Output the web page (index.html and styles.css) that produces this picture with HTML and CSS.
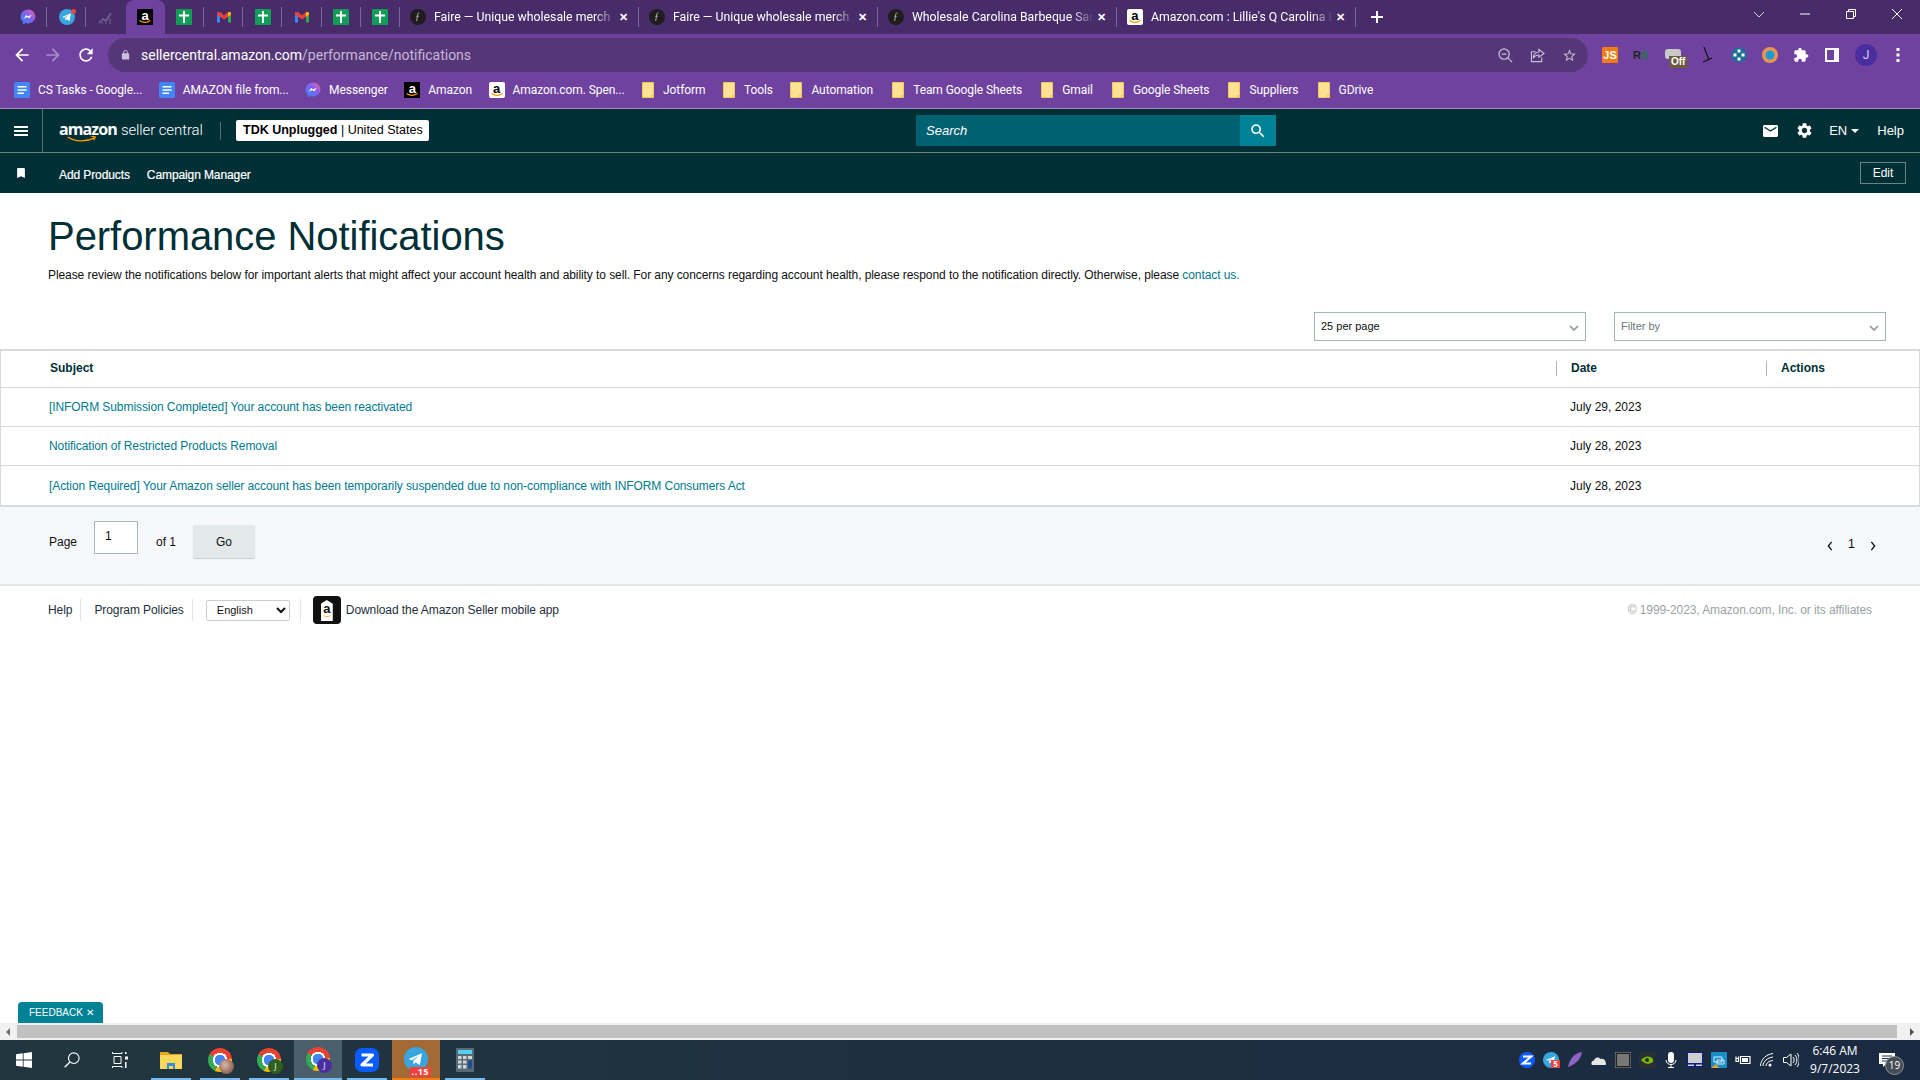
FILE: index.html
```html
<!DOCTYPE html>
<html lang="en">
<head>
    <meta charset="UTF-8">
    <title>Performance Notifications</title>
    <link rel="stylesheet" href="styles.css">
</head>
<body>
    <!-- shared icons -->
    <svg class="icon-defs" aria-hidden="true">
        <defs>
            <linearGradient id="msgGrad" x1="0" y1="1" x2="1" y2="0">
                <stop offset="0" stop-color="#2b8cf5"/>
                <stop offset="0.6" stop-color="#8a5cf0"/>
                <stop offset="1" stop-color="#f26a8e"/>
            </linearGradient>
        </defs>
        <symbol id="i-messenger" viewBox="0 0 16 16">
            <path fill="url(#msgGrad)" d="M8 .5C3.8.5.6 3.5.6 7.6c0 2.1.9 4 2.3 5.2v2.7l2.5-1.4c.8.2 1.7.3 2.6.3 4.2 0 7.4-3 7.4-6.8S12.2.5 8 .5z"/>
            <path fill="#fff" d="M3.6 9.8 6.2 6l2 1.5 3.6-1.9-2.6 3.9-2-1.5z"/>
        </symbol>
        <symbol id="i-telegram" viewBox="0 0 16 16">
            <circle cx="8" cy="8" r="8" fill="#37a6de"/>
            <path fill="#fff" d="M3 8l9-3.8-1.5 8-2.7-2-1.4 1.4-.3-2.4 4-3.5-5 3.1z"/>
        </symbol>
        <symbol id="i-chart" viewBox="0 0 16 16">
            <path fill="none" stroke="#7a6590" stroke-width="1.5" d="M1 14l4-4 3 2 5-8"/>
            <path fill="#5b4678" d="M3 11h2v4H3zm4 1h2v3H7zm4-3h2v6h-2z"/>
        </symbol>
        <symbol id="i-smile" viewBox="0 0 16 4">
            <path fill="none" stroke="#f90" stroke-width="1.1" d="M2.5.5c3.5 2.4 7.5 2.4 11 0"/>
        </symbol>
        <symbol id="i-sheet" viewBox="0 0 16 16">
            <rect width="16" height="16" rx="1" fill="#0f9d58"/>
            <path fill="#fff" d="M7 2h2v3.500h4v2H9V14H7V7.500H3v-2h4z"/>
        </symbol>
        <symbol id="i-gmail" viewBox="0 0 16 16">
            <path fill="#4285f4" d="M1 3.500h3v10H1z"/>
            <path fill="#34a853" d="M12 3.500h3v10h-3z"/>
            <path fill="#ea4335" d="M1 3.500 4 3l4 3.500L12 3l3 .5v2l-7 5-7-5z"/>
            <path fill="#fbbc04" d="M12 3l3 .5v2l-3 2.200z"/>
        </symbol>
        <symbol id="i-faire" viewBox="0 0 16 16">
            <circle cx="8" cy="8" r="8" fill="#1f1d1e"/>
            <path fill="none" stroke="#b0acaa" d="M9.400 4c-1.200-.2-1.500.4-1.700 1.500L6.700 12M6.400 7.300h2.400"/>
        </symbol>
        <symbol id="i-doc" viewBox="0 0 16 16">
            <rect width="16" height="16" rx="1.500" fill="#4285f4"/>
            <path fill="#fff" d="M3.500 4h9v1.600h-9zm0 3.200h9v1.600h-9zm0 3.200H10V12H3.500z"/>
        </symbol>
        <symbol id="i-folder" viewBox="0 0 14 16">
            <path fill="#fde293" stroke="#f0c75e" d="M1.500.5h11v15h-11z"/>
            <path fill="#f0c75e" d="M10 16v-3h3z"/>
        </symbol>
        <symbol id="i-chevron" viewBox="0 0 10 6">
            <path fill="none" stroke="#879596" stroke-width="1.600" d="M1 1l4 4 4-4"/>
        </symbol>
    </svg>

    <!-- browser chrome -->
    <div class="tab-strip">
        <div class="tab-pin sep"><svg class="fav"><use href="#i-messenger"/></svg></div>
        <div class="tab-pin sep"><svg class="fav"><use href="#i-telegram"/></svg><span class="dot"></span></div>
        <div class="tab-pin"><svg class="fav"><use href="#i-chart"/></svg></div>
        <div class="tab-pin active"><span class="fav amz black">a<svg><use href="#i-smile"/></svg></span></div>
        <div class="tab-pin sep"><svg class="fav"><use href="#i-sheet"/></svg></div>
        <div class="tab-pin sep"><svg class="fav"><use href="#i-gmail"/></svg></div>
        <div class="tab-pin sep"><svg class="fav"><use href="#i-sheet"/></svg></div>
        <div class="tab-pin sep"><svg class="fav"><use href="#i-gmail"/></svg></div>
        <div class="tab-pin sep"><svg class="fav"><use href="#i-sheet"/></svg></div>
        <div class="tab-pin sep"><svg class="fav"><use href="#i-sheet"/></svg></div>
        <div class="tab sep"><svg class="fav"><use href="#i-faire"/></svg><span class="tab-title">Faire — Unique wholesale merch</span><span class="tab-close">✕</span></div>
        <div class="tab sep"><svg class="fav"><use href="#i-faire"/></svg><span class="tab-title">Faire — Unique wholesale merch</span><span class="tab-close">✕</span></div>
        <div class="tab sep"><svg class="fav"><use href="#i-faire"/></svg><span class="tab-title">Wholesale Carolina Barbeque Sau</span><span class="tab-close">✕</span></div>
        <div class="tab sep"><span class="fav amz white">a<svg><use href="#i-smile"/></svg></span><span class="tab-title">Amazon.com : Lillie's Q Carolina B</span><span class="tab-close">✕</span></div>
        <svg class="new-tab" viewBox="0 0 12 12"><path fill="#fff" d="M5 0h2v5h5v2H7v5H5V7H0V5h5z"/></svg>
        <div class="win-controls">
            <svg viewBox="0 0 10 10"><path fill="none" stroke="#d8cfe4" d="M0 3l5 5 5-5"/></svg>
            <svg viewBox="0 0 10 10"><path fill="none" stroke="#fff" d="M0 5h10"/></svg>
            <svg viewBox="0 0 10 10"><path fill="none" stroke="#fff" d="M.5 2.500h7v7h-7zM2.500 2.500v-2h7v7h-2"/></svg>
            <svg viewBox="0 0 10 10"><path fill="none" stroke="#fff" d="M0 0l10 10M10 0 0 10"/></svg>
        </div>
    </div>

    <div class="toolbar">
        <svg class="nav-btn" viewBox="0 0 24 24"><path fill="#fff" d="M20 11H7.830l5.590-5.590L12 4l-8 8 8 8 1.410-1.410L7.830 13H20v-2z"/></svg>
        <svg class="nav-btn" viewBox="0 0 24 24"><path fill="#a88fc6" d="M12 4l-1.410 1.410L16.170 11H4v2h12.170l-5.580 5.590L12 20l8-8z"/></svg>
        <svg class="nav-btn" viewBox="0 0 24 24"><path fill="#fff" d="M17.650 6.350C16.200 4.900 14.210 4 12 4c-4.420 0-7.990 3.580-7.990 8s3.570 8 7.990 8c3.730 0 6.840-2.550 7.730-6h-2.080c-.82 2.330-3.040 4-5.650 4-3.310 0-6-2.690-6-6s2.690-6 6-6c1.660 0 3.140.69 4.220 1.780L13 11h7V4l-2.350 2.350z"/></svg>
        <div class="omnibox">
            <svg class="lock" viewBox="0 0 24 24"><path fill="#cbbdde" d="M18 8h-1V6c0-2.760-2.240-5-5-5S7 3.240 7 6v2H6c-1.100 0-2 .9-2 2v10c0 1.100.9 2 2 2h12c1.100 0 2-.9 2-2V10c0-1.100-.9-2-2-2zM9 6c0-1.660 1.340-3 3-3s3 1.340 3 3v2H9V6z"/></svg>
            <span class="url"><span class="url-host">sellercentral.amazon.com</span>/performance/notifications</span>
            <div class="omni-actions">
                <svg viewBox="0 0 16 16"><circle cx="6.500" cy="6.500" r="5.500" fill="none" stroke="#cbbdde" stroke-width="1.300"/><path stroke="#cbbdde" stroke-width="1.300" d="M4 6.500h5M10.500 10.500 15 15"/></svg>
                <svg viewBox="0 0 16 16"><path fill="none" stroke="#cbbdde" stroke-width="1.200" d="M6 4H1.500v10.500h11V10M9.500 1.500 15 5.800l-5.500 4V7.500C6.500 7.500 4.500 9 3.500 11c0-4 2.500-6.500 6-6.800z"/></svg>
                <svg viewBox="0 0 24 24"><path fill="#cbbdde" d="M22 9.240l-7.190-.62L12 2 9.190 8.630 2 9.240l5.460 4.730L5.820 21 12 17.270 18.180 21l-1.630-7.030L22 9.240zM12 15.400l-3.760 2.270 1-4.280-3.320-2.880 4.380-.38L12 6.100l1.710 4.040 4.380.38-3.320 2.880 1 4.280L12 15.400z"/></svg>
            </div>
        </div>
        <div class="extensions">
            <span class="ext ext-js">JS</span>
            <span class="ext ext-rs">R<b>S</b></span>
            <span class="ext ext-off"><i></i><b>Off</b></span>
            <svg class="ext" viewBox="0 0 16 16"><path fill="none" stroke="#111" stroke-width="1.200" d="M4 0l5 13M3 15l9-4"/></svg>
            <svg class="ext" viewBox="0 0 16 16"><circle cx="8" cy="8" r="7.500" fill="#1c6f96"/><path fill="#fff" d="M6.500 2.500h3v3h-3zm0 8h3v3h-3zm-4-4h3v3h-3zm8 0h3v3h-3z"/></svg>
            <svg class="ext" viewBox="0 0 16 16"><circle cx="8" cy="8" r="8" fill="#e89550"/><circle cx="8" cy="8" r="4.500" fill="#1b9ad6"/></svg>
            <svg class="ext" viewBox="0 0 24 24"><path fill="#fff" d="M20.500 11H19V7c0-1.100-.9-2-2-2h-4V3.500C13 2.120 11.880 1 10.500 1S8 2.120 8 3.500V5H4c-1.100 0-1.990.9-1.990 2v3.800H3.500c1.490 0 2.700 1.210 2.700 2.700s-1.210 2.700-2.700 2.700H2V20c0 1.100.9 2 2 2h3.800v-1.500c0-1.490 1.210-2.700 2.700-2.700 1.490 0 2.700 1.210 2.700 2.700V22H17c1.100 0 2-.9 2-2v-4h1.500c1.380 0 2.500-1.120 2.500-2.500S21.880 11 20.500 11z"/></svg>
            <svg class="ext" viewBox="0 0 16 16"><path fill="#fff" d="M1 1h14v14H1z"/><path fill="#6f42a0" d="M3 3h7v10H3z"/></svg>
            <span class="avatar">J</span>
            <svg class="ext dots" viewBox="0 0 4 16"><path fill="#fff" d="M.5 1h3v3h-3zm0 5.500h3v3h-3zm0 5.500h3v3h-3z"/></svg>
        </div>
    </div>

    <div class="bookmarks">
        <span class="bm"><svg class="fav"><use href="#i-doc"/></svg>CS Tasks - Google...</span>
        <span class="bm"><svg class="fav"><use href="#i-doc"/></svg>AMAZON file from...</span>
        <span class="bm"><svg class="fav"><use href="#i-messenger"/></svg>Messenger</span>
        <span class="bm"><span class="fav amz black">a<svg><use href="#i-smile"/></svg></span>Amazon</span>
        <span class="bm"><span class="fav amz white">a<svg><use href="#i-smile"/></svg></span>Amazon.com. Spen...</span>
        <span class="bm"><svg class="fav fold"><use href="#i-folder"/></svg>Jotform</span>
        <span class="bm"><svg class="fav fold"><use href="#i-folder"/></svg>Tools</span>
        <span class="bm"><svg class="fav fold"><use href="#i-folder"/></svg>Automation</span>
        <span class="bm"><svg class="fav fold"><use href="#i-folder"/></svg>Team Google Sheets</span>
        <span class="bm"><svg class="fav fold"><use href="#i-folder"/></svg>Gmail</span>
        <span class="bm"><svg class="fav fold"><use href="#i-folder"/></svg>Google Sheets</span>
        <span class="bm"><svg class="fav fold"><use href="#i-folder"/></svg>Suppliers</span>
        <span class="bm"><svg class="fav fold"><use href="#i-folder"/></svg>GDrive</span>
    </div>

    <!-- seller central page -->
    <div class="page">
        <div class="sc-header">
            <div class="hamburger"><span></span><span></span><span></span></div>
            <div class="logo">
                <span class="logo-amazon">amazon</span><span class="logo-seller">seller central</span>
                <svg class="logo-smile" viewBox="0 0 36 8"><path fill="none" stroke="#f90" stroke-width="1.500" d="M1 1c9 6 22 6 32 1M29 0l5 1-2 4"/></svg>
            </div>
            <div class="account"><b>TDK Unplugged</b> | United States</div>
            <div class="search">
                <span class="search-input">Search</span>
                <span class="search-btn"><svg viewBox="0 0 24 24"><path fill="#fff" d="M15.500 14h-.79l-.28-.27C15.410 12.590 16 11.110 16 9.500 16 5.910 13.090 3 9.500 3S3 5.910 3 9.500 5.910 16 9.500 16c1.610 0 3.090-.59 4.230-1.570l.27.28v.79l5 4.990L20.490 19l-4.990-5zm-6 0C7.010 14 5 11.990 5 9.500S7.010 5 9.500 5 14 7.010 14 9.500 11.990 14 9.500 14z"/></svg></span>
            </div>
            <div class="header-right">
                <svg class="hd-mail" viewBox="2 4 20 16"><path fill="#fff" d="M20 4H4c-1.100 0-1.990.9-1.990 2L2 18c0 1.100.9 2 2 2h16c1.100 0 2-.9 2-2V6c0-1.100-.9-2-2-2zm0 4l-8 5-8-5V6l8 5 8-5v2z"/></svg>
                <svg class="hd-gear" viewBox="2 2 20 20"><path fill="#fff" d="M19.140 12.940c.04-.3.06-.61.06-.94 0-.32-.02-.64-.07-.94l2.030-1.580c.18-.14.23-.41.12-.61l-1.920-3.320c-.12-.22-.37-.29-.59-.22l-2.390.96c-.5-.38-1.030-.7-1.620-.94l-.36-2.540c-.04-.24-.24-.41-.48-.41h-3.840c-.24 0-.43.17-.47.41l-.36 2.540c-.59.24-1.130.57-1.620.94l-2.390-.96c-.22-.08-.47 0-.59.22L2.740 8.870c-.12.21-.08.47.12.61l2.030 1.580c-.05.3-.09.63-.09.94s.02.64.07.94l-2.030 1.580c-.18.14-.23.41-.12.61l1.920 3.320c.12.22.37.29.59.22l2.390-.96c.5.38 1.030.7 1.620.94l.36 2.540c.05.24.24.41.48.41h3.840c.24 0 .44-.17.47-.41l.36-2.540c.59-.24 1.130-.56 1.620-.94l2.390.96c.22.08.47 0 .59-.22l1.920-3.320c.12-.22.07-.47-.12-.61l-2.010-1.580zM12 15.600c-1.980 0-3.600-1.620-3.600-3.600s1.620-3.600 3.600-3.600 3.600 1.620 3.600 3.600-1.620 3.600-3.600 3.600z"/></svg>
                <span class="hd-lang">EN<i class="caret"></i></span>
                <span class="hd-help">Help</span>
            </div>
        </div>

        <div class="sc-subnav">
            <svg class="sub-mark" viewBox="5 3 14 18"><path fill="#fff" d="M17 3H7c-1.100 0-2 .9-2 2v16l7-3 7 3V5c0-1.100-.9-2-2-2z"/></svg>
            <span class="sub-link first">Add Products</span>
            <span class="sub-link">Campaign Manager</span>
            <span class="edit-btn">Edit</span>
        </div>

        <div class="intro">
            <h1>Performance Notifications</h1>
            <p>Please review the notifications below for important alerts that might affect your account health and ability to sell. For any concerns regarding account health, please respond to the notification directly. Otherwise, please <a href="#">contact us.</a></p>
        </div>

        <div class="filters">
            <div class="dropdown">25 per page<svg><use href="#i-chevron"/></svg></div>
            <div class="dropdown muted">Filter by<svg><use href="#i-chevron"/></svg></div>
        </div>

        <table class="notif-table">
            <thead>
                <tr>
                    <th class="col-subject"><span>Subject</span></th>
                    <th class="col-date"><span>Date</span></th>
                    <th class="col-actions"><span>Actions</span></th>
                </tr>
            </thead>
            <tbody>
                <tr>
                    <td><a href="#">[INFORM Submission Completed] Your account has been reactivated</a></td>
                    <td class="date">July 29, 2023</td>
                    <td></td>
                </tr>
                <tr>
                    <td><a href="#">Notification of Restricted Products Removal</a></td>
                    <td class="date">July 28, 2023</td>
                    <td></td>
                </tr>
                <tr>
                    <td><a href="#">[Action Required] Your Amazon seller account has been temporarily suspended due to non-compliance with INFORM Consumers Act</a></td>
                    <td class="date">July 28, 2023</td>
                    <td></td>
                </tr>
            </tbody>
        </table>

        <div class="pagination">
            <span>Page</span>
            <input class="page-input" type="text" value="1">
            <span class="of">of 1</span>
            <button class="go-btn">Go</button>
            <div class="pager">
                <svg viewBox="0 0 8 12"><path fill="none" stroke="#111" stroke-width="1.600" d="M6 1 2 6l4 5"/></svg>
                <span>1</span>
                <svg viewBox="0 0 8 12"><path fill="none" stroke="#111" stroke-width="1.600" d="M2 1l4 5-4 5"/></svg>
            </div>
        </div>

        <div class="sc-footer">
            <span class="foot-link">Help</span>
            <span class="foot-link">Program Policies</span>
            <select class="lang-select"><option>English</option></select>
            <div class="app-promo">
                <span class="app-icon">a<svg><use href="#i-smile"/></svg></span>
                Download the Amazon Seller mobile app
            </div>
            <span class="copyright">© 1999-2023, Amazon.com, Inc. or its affiliates</span>
        </div>

        <div class="feedback">FEEDBACK <span>✕</span></div>
    </div>

    <div class="h-scroll">
        <span class="arrow-left"></span>
        <div class="h-thumb"></div>
        <span class="arrow-right"></span>
    </div>

    <!-- windows taskbar -->
    <div class="taskbar">
        <div class="tb-btn">
            <svg class="tb-win" viewBox="0 0 16 16"><path fill="#fff" d="M0 2.300l6.800-1v6.300H0zm7.600-1.100L16 0v7.600H7.600zM0 8.400h6.800v6.300L0 13.700zm7.600 0H16V16l-8.400-1.200z"/></svg>
        </div>
        <div class="tb-btn">
            <svg class="tb-ico" viewBox="0 0 16 16"><circle cx="9.800" cy="6.200" r="5.300" fill="none" stroke="#fff" stroke-width="1.100"/><path stroke="#fff" stroke-width="1.300" d="M6 10 .7 15.300"/></svg>
        </div>
        <div class="tb-btn">
            <svg class="tb-ico" viewBox="0 0 16 16"><path fill="none" stroke="#fff" d="M.5 0v1.500H10V0M2 4.500h7v7H2zM.5 16v-1.500H10V16"/><path fill="#fff" d="M13 0h1.500v2H13zm0 4.500h3v3h-3zm0 5.500h1.500v6H13z"/></svg>
        </div>
        <div class="task-items">
            <div class="task open">
                <svg class="tb-app" viewBox="0 0 22 18"><path fill="#e8a81e" d="M0 1h8l2 2h12v4H0z"/><path fill="#fbd75b" d="M0 4h22v14H0z"/><path fill="#2f8fd8" d="M7 12h8v6h-2v-3H9v3H7z"/></svg>
            </div>
            <div class="task open"><span class="chrome"><span class="chrome-badge photo"></span></span></div>
            <div class="task open"><span class="chrome"><span class="chrome-badge green">J</span></span></div>
            <div class="task active"><span class="chrome"><span class="chrome-badge purple">J</span></span></div>
            <div class="task open">
                <svg class="tb-app zoomapp" viewBox="0 0 24 24"><rect width="24" height="24" rx="7" fill="#0b5cff"/><path fill="none" stroke="#fff" stroke-width="3.200" stroke-linejoin="round" d="M6.500 7h11L7 17h11"/></svg>
            </div>
            <div class="task tele">
                <svg class="tb-app zoomapp" viewBox="0 0 16 16"><use href="#i-telegram"/></svg>
                <span class="tele-badge">..15</span>
            </div>
            <div class="task open">
                <svg class="tb-app calc" viewBox="0 0 18 24"><rect width="18" height="24" rx="1" fill="#5a6b78"/><path fill="#54d0f0" d="M2 2h14v4H2z"/><path fill="#cfd6da" d="M2 8h3.500v3H2zm5 0h3.500v3H7zm5 0h4v3h-4zM2 12.500h3.500v3H2zm5 0h3.500v3H7zM2 17h3.500v3.500H2zm5 0h3.500v3.500H7z"/><path fill="#1d4e8f" d="M12 12.500h4v8h-4z"/></svg>
            </div>
        </div>
        <div class="tray">
            <svg class="tray-ico" viewBox="0 0 16 16"><circle cx="8" cy="8" r="8" fill="#0b5cff"/><path fill="none" stroke="#fff" stroke-width="2.200" d="M4 4.500h8l-8 7h8"/></svg>
            <span class="tray-tele"><svg class="tray-ico" viewBox="0 0 16 16"><use href="#i-telegram"/></svg><b>5</b></span>
            <svg class="tray-ico" viewBox="0 0 16 16"><path fill="#8f63c4" d="M15 0C8 1 3 6 1 15c1 0 4-2 6-3 5-3 7-7 8-12z"/></svg>
            <svg class="tray-ico" viewBox="0 0 16 16"><path fill="#e6e6e6" d="M1 13c-1.500-2 0-4.500 2-4.500C4 5 8 4.500 9.500 7c2.500-1 5 1 5 3 1 1.500.5 3-.5 3z"/></svg>
            <svg class="tray-ico" viewBox="0 0 16 16"><rect width="16" height="16" fill="#222" stroke="#999"/><path stroke="#ccc" d="M2 3h12M2 5h12M2 7h12M2 9h12M2 11h12M2 13h12"/></svg>
            <svg class="tray-ico" viewBox="0 0 16 16"><rect width="16" height="16" rx="1" fill="#2a2f33"/><path fill="#76b900" d="M2 8c3-4 9-5 12-1v3C10 13 5 12 2 8z"/><circle cx="8" cy="8" r="2" fill="#2a2f33"/></svg>
            <svg class="tray-ico" viewBox="0 0 16 16"><rect x="5" width="6" height="11" rx="3" fill="#fff"/><path fill="none" stroke="#fff" d="M3 8c0 6 10 6 10 0M8 13v3M5 15.500h6"/></svg>
            <svg class="tray-ico" viewBox="0 0 16 16"><rect x=".5" y=".5" width="15" height="14" fill="#cfcfcf" stroke="#0f1f8a"/><path fill="#0f1f8a" d="M0 11h16v1.500H0zM7 11h2v4H7z"/></svg>
            <svg class="tray-ico" viewBox="0 0 16 16"><rect width="16" height="16" rx="1" fill="#1a8ec7"/><path fill="none" stroke="#d8f0fb" d="M3 5h8v5H3zM6 8h7v4H6z"/><path fill="#e3a53b" d="M0 16l5-4 3 4z"/></svg>
            <svg class="tray-ico" viewBox="0 0 16 16"><path fill="none" stroke="#fff" stroke-width="1.200" d="M5.500 4.500H15v7H5.500zM1 6.500h2.500v3H1zM1 6.500v-2M3.500 6.500v-2"/><path fill="#fff" d="M7 6h6v4H7z"/></svg>
            <svg class="tray-ico" viewBox="0 0 16 16"><path fill="none" stroke="#fff" d="M1.500 14C2 7 7 2.500 14 1.500M4 14c.5-5 4-8 10-9M7 14c.3-3 2.500-5 7-5.500"/><circle cx="11" cy="13" r="1.500" fill="#fff"/></svg>
            <svg class="tray-ico" viewBox="0 0 16 16"><path fill="none" stroke="#fff" d="M.5 5.500h3L8 2v12l-4.500-3.500h-3zM10 5c1.500 1.500 1.500 4.500 0 6M12 3c2.500 2.500 2.500 7.500 0 10M14 1c3 3.500 3 10.500 0 14"/></svg>
            <div class="clock"><span>6:46 AM</span><span>9/7/2023</span></div>
            <div class="notify">
                <svg viewBox="0 0 16 14"><path fill="#fff" d="M0 0h16v11H7l-3 3v-3H0z"/><path stroke="#1b2a40" d="M3 3h10M3 5.500h10M3 8h7"/></svg>
                <span class="notify-count">19</span>
            </div>
        </div>
    </div>
</body>
</html>
```

FILE: styles.css
```css
* {
    margin: 0;
    padding: 0;
    box-sizing: border-box;
}

body {
    font-family: "Liberation Sans", Arial, sans-serif;
    font-size: 12px;
    color: #0f1111;
    background: #fff;
    display: flex;
    flex-direction: column;
    height: 100vh;
    overflow: hidden;
}

.icon-defs {
    position: absolute;
    width: 0;
    height: 0;
}

.fav {
    width: 16px;
    height: 16px;
    flex: none;
}

/* amazon favicon, black or white tile */
.amz {
    position: relative;
    display: block;
    font: bold 13px/13px "Liberation Sans", sans-serif;
    text-align: center;
    letter-spacing: 0;
}

.amz svg {
    position: absolute;
    left: 0;
    bottom: 1px;
    width: 16px;
    height: 4px;
}

.amz.black {
    background: #000;
    color: #fff;
}

.amz.white {
    background: #fff;
    color: #000;
    border-radius: 2px;
}

/* browser tabs */
.tab-strip {
    height: 34px;
    flex: none;
    background: #472c69;
    display: flex;
    align-items: stretch;
    padding-left: 8px;
    font-family: Roboto, sans-serif;
    color: #fff;
}

.tab-pin {
    width: 39.2px;
    flex: none;
    display: flex;
    align-items: center;
    justify-content: center;
    position: relative;
}

.tab-pin.active {
    background: #6f42a0;
    border-radius: 8px 8px 0 0;
}

.sep::after {
    content: "";
    position: absolute;
    right: 0;
    top: 7px;
    height: 20px;
    width: 1px;
    background: #7b6796;
}

.dot {
    position: absolute;
    top: 9px;
    left: 24px;
    width: 5px;
    height: 5px;
    border-radius: 50%;
    background: #e5493f;
}

.tab {
    width: 239px;
    flex: none;
    display: flex;
    align-items: center;
    padding: 0 9px 0 10px;
    position: relative;
    font-size: 12.3px;
}

.tab-title {
    flex: 1;
    margin-left: 8px;
    white-space: nowrap;
    overflow: hidden;
    -webkit-mask-image: linear-gradient(to right, #000 88%, transparent);
    mask-image: linear-gradient(to right, #000 88%, transparent);
}

.tab-close {
    font-size: 11px;
    font-weight: 700;
    margin-left: 2px;
    width: 12px;
    text-align: center;
}

.new-tab {
    width: 12px;
    height: 12px;
    align-self: center;
    margin-left: 15px;
}

.win-controls {
    margin-left: auto;
    display: flex;
    align-items: flex-start;
    padding-top: 9px;
    padding-right: 18px;
    gap: 36px;
}

.win-controls svg {
    width: 10px;
    height: 10px;
}

/* address bar */
.toolbar {
    height: 38px;
    flex: none;
    background: #6f42a0;
    display: flex;
    align-items: flex-end;
    padding-left: 12px;
}

.nav-btn {
    width: 20px;
    height: 20px;
    margin-right: 11px;
    align-self: center;
    margin-top: 4px;
}

.nav-btn:nth-child(2) {
    margin-right: 13px;
}

.nav-btn:nth-child(3) {
    margin-right: 0;
}

.omnibox {
    width: 1480px;
    height: 34px;
    margin-left: 12px;
    background: #553777;
    border-radius: 17px;
    display: flex;
    align-items: center;
    padding-left: 12px;
    font-family: Roboto, sans-serif;
    font-size: 14px;
    color: #c7b8da;
}

.lock {
    width: 11px;
    height: 12px;
    margin-right: 10px;
}

.url-host {
    color: #fff;
}

.omni-actions {
    margin-left: auto;
    display: flex;
    gap: 17px;
    padding-right: 11px;
}

.omni-actions svg {
    width: 15px;
    height: 15px;
}

.extensions {
    display: flex;
    align-items: center;
    gap: 15px;
    margin-left: 14px;
    align-self: center;
    margin-top: 4px;
}

.ext {
    width: 16px;
    height: 16px;
    flex: none;
}

.ext-js {
    background: #f57c13;
    color: #fff;
    font: bold 11px/16px "Liberation Sans", sans-serif;
    text-align: center;
    border-radius: 1px;
}

.ext-rs {
    font: bold 11px/16px "Liberation Sans", sans-serif;
    color: #222;
}

.ext-rs b {
    color: #1c7a3e;
}

.ext-off {
    position: relative;
    width: 20px;
    margin-left: 1px;
}

.ext-off i {
    display: block;
    width: 16px;
    height: 10px;
    margin-top: 2px;
    background: #c9c9c9;
    border-radius: 3px;
}

.ext-off b {
    position: absolute;
    left: 4px;
    top: 9px;
    background: #6d5a3f;
    color: #fff;
    font: bold 10px/12px "Liberation Sans", sans-serif;
    padding: 0 2px;
}

.avatar {
    width: 22px;
    height: 22px;
    border-radius: 50%;
    background: #4a2d9e;
    color: #d9d0f0;
    font-family: Roboto, sans-serif;
    font-size: 12px;
    display: flex;
    align-items: center;
    justify-content: center;
}

.dots {
    width: 4px;
    margin-left: 4px;
}

/* bookmarks bar */
.bookmarks {
    height: 37px;
    flex: none;
    background: #6f42a0;
    border-bottom: 1px solid #a58bc0;
    display: flex;
    align-items: center;
    padding-left: 14px;
    font-family: Roboto, sans-serif;
    font-size: 12px;
    letter-spacing: -0.08px;
    color: #fff;
    gap: 16.5px;
}

.bm {
    display: flex;
    align-items: center;
    gap: 8px;
    white-space: nowrap;
}

.bm:nth-child(n+9) {
    margin-left: 1.6px;
}

.fav.fold {
    width: 14px;
    height: 16px;
}

/* seller central header */
.page {
    flex: 1;
    position: relative;
    min-height: 0;
}

.sc-header {
    height: 44px;
    background: #002f36;
    border-bottom: 1px solid #6c8085;
    display: flex;
    align-items: center;
    color: #fff;
}

.hamburger {
    width: 43px;
    height: 100%;
    border-right: 1px solid #52706f;
    display: flex;
    flex-direction: column;
    justify-content: center;
    gap: 2px;
    padding-left: 14px;
}

.hamburger span {
    width: 14px;
    height: 2px;
    background: #fff;
}

.logo {
    position: relative;
    display: flex;
    align-items: baseline;
    margin-left: 16px;
    width: 161px;
    height: 36px;
    padding-top: 5px;
}

.logo-amazon {
    font: bold 16px "Open Sans", sans-serif;
    letter-spacing: -0.9px;
}

.logo-seller {
    font: 300 15px Roboto, sans-serif;
    margin-left: 4px;
    letter-spacing: -0.1px;
}

.logo-smile {
    position: absolute;
    left: 8px;
    top: 23px;
    width: 30px;
    height: 7px;
}

.account {
    position: relative;
    background: #fff;
    color: #000;
    height: 21px;
    line-height: 21px;
    width: 193px;
    font-size: 12.5px;
    border-radius: 2px;
    padding-left: 7px;
    white-space: nowrap;
    margin-left: 16px;
}

.account::before {
    content: "";
    position: absolute;
    left: -16px;
    top: 2px;
    height: 18px;
    width: 1px;
    background: #52706f;
}

.search {
    display: flex;
    height: 31px;
    margin-left: 487px;
}

.search-input {
    width: 324px;
    background: #006170;
    font-style: italic;
    font-size: 13px;
    line-height: 31px;
    padding-left: 10px;
}

.search-btn {
    width: 36px;
    background: #008296;
    display: flex;
    align-items: center;
    justify-content: center;
}

.search-btn svg {
    width: 18px;
    height: 18px;
}

.header-right {
    margin-left: auto;
    display: flex;
    align-items: center;
    padding-right: 16px;
    font-size: 13px;
}

.hd-mail {
    width: 15px;
    height: 12px;
}

.hd-gear {
    width: 15px;
    height: 15px;
    margin-left: 19px;
}

.hd-lang {
    margin-left: 17px;
    display: flex;
    align-items: center;
}

.caret {
    width: 0;
    height: 0;
    margin-left: 4px;
    border-left: 4px solid transparent;
    border-right: 4px solid transparent;
    border-top: 4px solid #fff;
}

.hd-help {
    margin-left: 18px;
}

/* saved links row */
.sc-subnav {
    height: 40px;
    background: #002f36;
    display: flex;
    align-items: center;
    color: #fff;
    padding-left: 17px;
}

.sub-mark {
    width: 8px;
    height: 10px;
}

.sub-link {
    margin-left: 17px;
    margin-top: 4px;
    letter-spacing: -0.1px;
    -webkit-text-stroke: 0.2px #fff;
}

.sub-link.first {
    margin-left: 34px;
}

.edit-btn {
    margin-left: auto;
    margin-right: 14px;
    width: 46px;
    height: 22px;
    border: 1px solid #6c8085;
    text-align: center;
    line-height: 20px;
}

/* page body */
.intro {
    padding: 19px 48px 0;
}

h1 {
    font-size: 40px;
    font-weight: 400;
    line-height: 48px;
    letter-spacing: -0.05px;
    color: #002f36;
}

.intro p {
    margin-top: 6px;
    line-height: 18px;
    letter-spacing: -0.08px;
}

a {
    color: #007b8f;
    text-decoration: none;
    letter-spacing: -0.08px;
}

.filters {
    display: flex;
    justify-content: flex-end;
    gap: 28px;
    margin-top: 28px;
    padding-right: 34px;
}

.dropdown {
    width: 272px;
    height: 29px;
    border: 1px solid #a6b5b7;
    display: flex;
    align-items: center;
    justify-content: space-between;
    padding: 0 6px 1px;
    font-size: 11px;
}

.dropdown.muted {
    color: #6c7778;
}

.dropdown svg {
    width: 10px;
    height: 6px;
    margin-top: 3px;
}

.notif-table {
    width: 100%;
    margin-top: 8px;
    border-collapse: separate;
    border-spacing: 0;
    table-layout: fixed;
    border: 1px solid #d5dbdb;
    border-top-width: 2px;
    border-bottom-width: 2px;
}

.notif-table th {
    height: 37px;
    padding-bottom: 2px;
    text-align: left;
    font-size: 12px;
    color: #002f36;
    border-bottom: 1px solid #d5dbdb;
}

.notif-table td {
    height: 39px;
    border-bottom: 1px solid #d5dbdb;
    padding-left: 48px;
}

.notif-table tbody tr:last-child td {
    border-bottom: 0;
}

.notif-table th span {
    display: block;
    line-height: 15px;
}

.col-subject {
    padding-left: 49px;
    width: 1555px;
}

.col-date {
    width: 210px;
}

.col-date span,
.col-actions span {
    border-left: 1px solid #aeb8b9;
    padding-left: 14px;
}

.notif-table td.date {
    padding-left: 14px;
}

/* pagination */
.pagination {
    height: 79px;
    background: #f7f8fa;
    border-bottom: 2px solid #e2e6e6;
    display: flex;
    align-items: center;
    padding: 0 43px 8px 49px;
}

.page-input {
    width: 44px;
    height: 33px;
    margin-left: 17px;
    margin-top: -8px;
    border: 1px solid #a6b5b7;
    background: #fff;
    padding: 0 0 3px 10px;
    font: 12px "Liberation Sans", sans-serif;
    color: #0f1111;
}

.of {
    margin-left: 18px;
}

.go-btn {
    width: 62px;
    height: 33px;
    margin-left: 17px;
    background: #e3e9e9;
    border: 0;
    border-radius: 2px;
    box-shadow: 0 1px 1px #c4cccc;
    font: 12px "Liberation Sans", sans-serif;
    color: #0f1111;
}

.pager {
    margin-left: auto;
    margin-top: 4px;
    display: flex;
    align-items: center;
    gap: 14px;
    font-size: 13px;
    color: #111;
}

.pager svg {
    width: 8px;
    height: 10px;
    margin-top: 5px;
}

/* footer */
.sc-footer {
    height: 48px;
    display: flex;
    align-items: center;
    padding: 0 48px;
    color: #232f3e;
    letter-spacing: -0.08px;
}

.foot-link {
    padding-right: 8px;
    margin-right: 13px;
    border-right: 1px solid #e2e6e6;
    line-height: 22px;
}

.lang-select {
    width: 84px;
    height: 21px;
    font: 11px "Liberation Sans", sans-serif;
    padding-left: 6px;
    border: 1px solid #c9cfcf;
    border-radius: 2px;
    background: #fff;
    color: #111;
}

.app-promo {
    display: flex;
    align-items: center;
    gap: 5px;
    margin-left: 10px;
    padding-left: 12px;
    border-left: 1px solid #e2e6e6;
    height: 22px;
}

.app-icon {
    position: relative;
    width: 28px;
    height: 28px;
    background: #111;
    border-radius: 4px;
    color: #111;
    font: bold 13px/26px "Liberation Sans", sans-serif;
    text-align: center;
    overflow: hidden;
    z-index: 0;
}

/* white price tag behind the letter */
.app-icon::before {
    content: "";
    position: absolute;
    left: 8px;
    top: 4px;
    width: 12px;
    height: 21px;
    background: #fff;
    clip-path: polygon(50% 0, 100% 18%, 100% 100%, 0 100%, 0 18%);
    z-index: -1;
}

.app-icon svg {
    position: absolute;
    left: 9px;
    top: 19px;
    width: 10px;
    height: 3px;
}

.copyright {
    margin-left: auto;
    color: #9aa3a4;
}

.feedback {
    position: absolute;
    left: 18px;
    bottom: 0;
    width: 85px;
    height: 21px;
    background: #008296;
    color: #fff;
    border-radius: 4px 4px 0 0;
    font-size: 10px;
    line-height: 21px;
    padding-left: 11px;
    white-space: nowrap;
}

/* bottom scrollbar */
.h-scroll {
    height: 17px;
    flex: none;
    background: #f1f1f1;
    display: flex;
    align-items: center;
}

.h-thumb {
    width: 1880px;
    height: 13px;
    background: #c1c1c1;
    margin: 0 auto 0 7px;
}

.arrow-left,
.arrow-right {
    width: 0;
    height: 0;
    border-top: 4px solid transparent;
    border-bottom: 4px solid transparent;
}

.arrow-left {
    margin-left: 6px;
    border-right: 4px solid #6f6f6f;
}

.arrow-right {
    margin-right: 6px;
    border-left: 4px solid #505050;
}

/* taskbar */
.taskbar {
    height: 40px;
    flex: none;
    background: linear-gradient(to right, #22363f, #1a2a42);
    display: flex;
    align-items: stretch;
    color: #fff;
    font-family: "Open Sans", sans-serif;
}

.tb-btn {
    width: 48px;
    display: flex;
    align-items: center;
    justify-content: center;
}

.tb-win,
.tb-ico {
    width: 16px;
    height: 16px;
}

.task-items {
    display: flex;
    gap: 1px;
    margin-left: 3px;
}

.task {
    width: 48px;
    display: flex;
    align-items: center;
    justify-content: center;
    position: relative;
}

.task.open {
    background: linear-gradient(#76b9ed, #76b9ed) no-repeat center bottom / 40px 2px;
}

.task.active {
    background: #4a5f6b;
    border-bottom: 2px solid #76b9ed;
}

.task.tele {
    background: #a36a36;
    border-bottom: 2px solid #f57c13;
}

.tb-app {
    width: 22px;
    height: 18px;
}

.tb-app.zoomapp {
    width: 24px;
    height: 24px;
}

.tb-app.calc {
    width: 18px;
    height: 24px;
}

.chrome {
    width: 24px;
    height: 24px;
    border-radius: 50%;
    position: relative;
    background:
        radial-gradient(circle, #4285f4 0 30%, #fff 31% 42%, transparent 43%),
        conic-gradient(#ea4335 0 85deg, #fbbc04 85deg 205deg, #34a853 205deg 300deg, #ea4335 300deg);
}

.chrome-badge {
    position: absolute;
    right: -2px;
    bottom: -2px;
    width: 15px;
    height: 15px;
    border-radius: 50%;
    font-size: 9px;
    line-height: 15px;
    text-align: center;
    color: #e8e8e8;
}

.chrome-badge.photo {
    background: radial-gradient(circle at 40% 40%, #d9b8a8, #6b4034);
}

.chrome-badge.green {
    background: #2f5f1c;
}

.chrome-badge.purple {
    background: #4a2d9e;
}

.tele-badge {
    position: absolute;
    right: 9px;
    bottom: 1px;
    background: #f0413c;
    font-size: 9px;
    font-weight: 700;
    line-height: 10px;
    padding: 0 2px;
    letter-spacing: 0.5px;
}

.tray {
    margin-left: auto;
    display: flex;
    align-items: center;
    gap: 8px;
    padding-right: 5px;
}

.tray-ico {
    width: 16px;
    height: 16px;
    flex: none;
}

.tray-tele {
    position: relative;
    display: flex;
}

.tray-tele b {
    position: absolute;
    right: -1px;
    bottom: 0;
    width: 9px;
    background: #f0413c;
    font-size: 8px;
    line-height: 8px;
    text-align: center;
}

.clock {
    width: 54px;
    margin-left: 1px;
    display: flex;
    flex-direction: column;
    align-items: center;
    gap: 4px;
    font-size: 12px;
    line-height: 14px;
}

.notify {
    position: relative;
    width: 16px;
    height: 14px;
    margin-left: 9px;
    margin-right: 20px;
}

.notify svg {
    width: 16px;
    height: 14px;
    display: block;
}

.notify-count {
    position: absolute;
    left: 6px;
    top: 3px;
    width: 19px;
    height: 19px;
    border-radius: 50%;
    background: #444c54;
    border: 1px solid #8a9299;
    font-size: 10px;
    line-height: 17px;
    text-align: center;
}
```
